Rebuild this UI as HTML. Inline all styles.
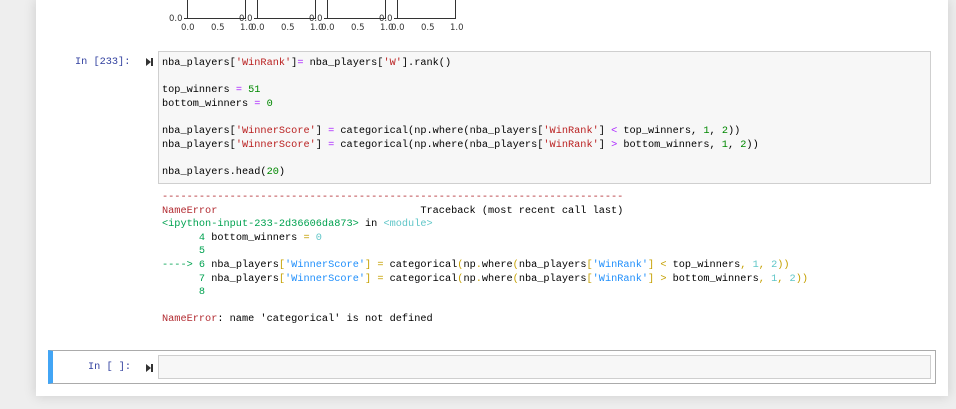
<!DOCTYPE html>
<html><head><style>
body{margin:0;width:956px;height:409px;background:#eeeeee;position:relative;overflow:hidden;font-family:"Liberation Mono",monospace;}
#nb{position:absolute;left:36px;top:0;width:912px;height:396px;background:#fff;box-shadow:0 0 12px rgba(0,0,0,.15);}
.code{position:absolute;font-size:10.25px;line-height:13.6px;white-space:pre;color:#000;}
.p{color:#303f9f}
.s{color:#ba2121}
.o{color:#aa22ff}
.n{color:#008800}
.r{color:#b22b31}
.c{color:#60c6c8}
.y{color:#c5a000}
.b{color:#208ffb}
.gr{color:#00a250}
</style></head><body>
<div id="nb"></div>
<svg style="position:absolute;left:0;top:0" width="956" height="40" font-family="DejaVu Sans, sans-serif" font-size="8.5" fill="#333">
<g stroke="#333" stroke-width="1">
<line x1="187.5" y1="0" x2="187.5" y2="18"/><line x1="245.5" y1="0" x2="245.5" y2="18"/><line x1="187" y1="18.5" x2="246" y2="18.5"/>
<line x1="257.5" y1="0" x2="257.5" y2="18"/><line x1="315.5" y1="0" x2="315.5" y2="18"/><line x1="257" y1="18.5" x2="316" y2="18.5"/>
<line x1="327.5" y1="0" x2="327.5" y2="18"/><line x1="385.5" y1="0" x2="385.5" y2="18"/><line x1="327" y1="18.5" x2="386" y2="18.5"/>
<line x1="397.5" y1="0" x2="397.5" y2="18"/><line x1="455.5" y1="0" x2="455.5" y2="18"/><line x1="397" y1="18.5" x2="456" y2="18.5"/>
<line x1="184" y1="18.5" x2="187" y2="18.5"/><line x1="254" y1="18.5" x2="257" y2="18.5"/><line x1="324" y1="18.5" x2="327" y2="18.5"/><line x1="394" y1="18.5" x2="397" y2="18.5"/>
</g>
<text x="169" y="21">0.0</text><text x="239" y="21">0.0</text><text x="309" y="21">0.0</text><text x="379" y="21">0.0</text>
<text x="181" y="30">0.0</text><text x="211" y="30">0.5</text><text x="240" y="30">1.0</text>
<text x="251" y="30">0.0</text><text x="281" y="30">0.5</text><text x="310" y="30">1.0</text>
<text x="321" y="30">0.0</text><text x="351" y="30">0.5</text><text x="380" y="30">1.0</text>
<text x="391" y="30">0.0</text><text x="421" y="30">0.5</text><text x="450" y="30">1.0</text>
</svg>
<div class="code p" style="left:75px;top:56px;">In [233]:</div>
<div style="position:absolute;left:146px;top:58px;width:0;height:0;border-left:5px solid #333;border-top:4px solid transparent;border-bottom:4px solid transparent"></div>
<div style="position:absolute;left:151px;top:58px;width:1.5px;height:8px;background:#333"></div>
<div style="position:absolute;left:158px;top:51px;width:771px;height:131px;background:#f7f7f7;border:1px solid #cfcfcf;"></div>
<div class="code" style="left:162px;top:57px;">nba_players[<span class="s">'WinRank'</span>]<span class="o">=</span> nba_players[<span class="s">'W'</span>].rank()

top_winners <span class="o">=</span> <span class="n">51</span>
bottom_winners <span class="o">=</span> <span class="n">0</span>

nba_players[<span class="s">'WinnerScore'</span>] <span class="o">=</span> categorical(np.where(nba_players[<span class="s">'WinRank'</span>] <span class="o">&lt;</span> top_winners, <span class="n">1</span>, <span class="n">2</span>))
nba_players[<span class="s">'WinnerScore'</span>] <span class="o">=</span> categorical(np.where(nba_players[<span class="s">'WinRank'</span>] <span class="o">&gt;</span> bottom_winners, <span class="n">1</span>, <span class="n">2</span>))

nba_players.head(<span class="n">20</span>)</div>
<div class="code" style="left:162px;top:191px;"><span class="r">---------------------------------------------------------------------------</span>
<span class="r">NameError</span>                                 Traceback (most recent call last)
<span class="gr">&lt;ipython-input-233-2d36606da873&gt;</span> in <span class="c">&lt;module&gt;</span>
<span class="gr">      4</span> bottom_winners <span class="y">=</span> <span class="c">0</span>
<span class="gr">      5</span>
<span class="gr">----&gt; 6</span> nba_players<span class="y">[</span><span class="b">'WinnerScore'</span><span class="y">]</span> <span class="y">=</span> categorical<span class="y">(</span>np<span class="y">.</span>where<span class="y">(</span>nba_players<span class="y">[</span><span class="b">'WinRank'</span><span class="y">]</span> <span class="y">&lt;</span> top_winners<span class="y">,</span> <span class="c">1</span><span class="y">,</span> <span class="c">2</span><span class="y">))</span>
<span class="gr">      7</span> nba_players<span class="y">[</span><span class="b">'WinnerScore'</span><span class="y">]</span> <span class="y">=</span> categorical<span class="y">(</span>np<span class="y">.</span>where<span class="y">(</span>nba_players<span class="y">[</span><span class="b">'WinRank'</span><span class="y">]</span> <span class="y">&gt;</span> bottom_winners<span class="y">,</span> <span class="c">1</span><span class="y">,</span> <span class="c">2</span><span class="y">))</span>
<span class="gr">      8</span>

<span class="r">NameError</span>: name 'categorical' is not defined</div>
<div style="position:absolute;left:48px;top:350px;width:882px;height:32px;border:1px solid #ababab;border-left:5px solid #42a5f5;"></div>
<div class="code p" style="left:88px;top:361px;">In [ ]:</div>
<div style="position:absolute;left:146px;top:364px;width:0;height:0;border-left:5px solid #333;border-top:4px solid transparent;border-bottom:4px solid transparent"></div>
<div style="position:absolute;left:151px;top:364px;width:1.5px;height:8px;background:#333"></div>
<div style="position:absolute;left:158px;top:355px;width:771px;height:22px;background:#f7f7f7;border:1px solid #cfcfcf;"></div>
</body></html>
